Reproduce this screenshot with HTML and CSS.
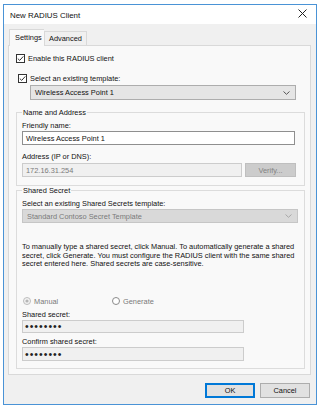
FILE: index.html
```html
<!DOCTYPE html>
<html lang="en">
<head>
    <meta charset="UTF-8">
    <meta name="viewport" content="width=device-width, initial-scale=1.0">
    <title>New RADIUS Client</title>
    <link rel="stylesheet" href="styles.css">
</head>
<body>
    <div class="window">
        <div class="title-bar">
            <span class="title-text">New RADIUS Client</span>
            <svg class="close-icon" width="9" height="9" viewBox="0 0 9 9">
                <path d="M0.5 0.5 L8.5 8.5 M8.5 0.5 L0.5 8.5" stroke="#222" stroke-width="1" fill="none"/>
            </svg>
        </div>
        <div class="dialog-body">
            <div class="tabs">
                <div class="tab active">Settings</div>
                <div class="tab">Advanced</div>
            </div>
            <div class="tab-panel">
                <label class="check-row first">
                    <svg class="checkbox" width="9" height="9" viewBox="0 0 9 9">
                        <rect x="0.5" y="0.5" width="8" height="8" fill="#fff" stroke="#333"/>
                        <path d="M1.8 4.6 L3.7 6.4 L7.3 2.4" stroke="#333" stroke-width="1" fill="none"/>
                    </svg>
                    Enable this RADIUS client
                </label>
                <label class="check-row second">
                    <svg class="checkbox" width="9" height="9" viewBox="0 0 9 9">
                        <rect x="0.5" y="0.5" width="8" height="8" fill="#fff" stroke="#333"/>
                        <path d="M1.8 4.6 L3.7 6.4 L7.3 2.4" stroke="#333" stroke-width="1" fill="none"/>
                    </svg>
                    Select an existing template:
                </label>
                <div class="combo template-combo">
                    <span>Wireless Access Point 1</span>
                    <svg class="chevron" width="7" height="4" viewBox="0 0 7 4">
                        <path d="M0.5 0.5 L3.5 3.3 L6.5 0.5" stroke="#555" stroke-width="1" fill="none"/>
                    </svg>
                </div>

                <fieldset class="group name-group">
                    <legend>Name and Address</legend>
                    <div class="field-label">Friendly name:</div>
                    <div class="textbox friendly">Wireless Access Point 1</div>
                    <div class="field-label gap-lg">Address (IP or DNS):</div>
                    <div class="address-row">
                        <div class="textbox disabled address">172.16.31.254</div>
                        <div class="btn disabled-btn">Verify...</div>
                    </div>
                </fieldset>

                <fieldset class="group secret-group">
                    <legend>Shared Secret</legend>
                    <div class="field-label">Select an existing Shared Secrets template:</div>
                    <div class="combo disabled-combo">
                        <span>Standard Contoso Secret Template</span>
                        <svg class="chevron" width="7" height="4" viewBox="0 0 7 4">
                            <path d="M0.5 0.5 L3.5 3.3 L6.5 0.5" stroke="#a8a8a8" stroke-width="1" fill="none"/>
                        </svg>
                    </div>
                    <p class="help-text">To manually type a shared secret, click Manual. To automatically generate a shared<br>secret, click Generate. You must configure the RADIUS client with the same shared<br>secret entered here. Shared secrets are case-sensitive.</p>
                    <div class="radio-row">
                        <div class="radio-item">
                            <svg width="8" height="8" viewBox="0 0 8 8">
                                <circle cx="4" cy="4" r="3.5" fill="#f3f3f3" stroke="#bcbcbc"/>
                                <circle cx="4" cy="4" r="1.6" fill="#b5b5b5"/>
                            </svg>
                            Manual
                        </div>
                        <div class="radio-item generate">
                            <svg width="8" height="8" viewBox="0 0 8 8">
                                <circle cx="4" cy="4" r="3.5" fill="#fff" stroke="#8a8a8a"/>
                            </svg>
                            Generate
                        </div>
                    </div>
                    <div class="field-label">Shared secret:</div>
                    <div class="textbox disabled secret">&bull;&bull;&bull;&bull;&bull;&bull;&bull;&bull;</div>
                    <div class="field-label">Confirm shared secret:</div>
                    <div class="textbox disabled secret last">&bull;&bull;&bull;&bull;&bull;&bull;&bull;&bull;</div>
                </fieldset>
            </div>
            <div class="footer">
                <div class="btn default-btn">OK</div>
                <div class="btn">Cancel</div>
            </div>
        </div>
    </div>
</body>
</html>
```

FILE: styles.css
```css
* {
    margin: 0;
    padding: 0;
    box-sizing: border-box;
}
body {
    font-family: "Liberation Sans", Arial, sans-serif;
    font-size: 7.4px;
    color: #111;
    background: #fff;
    width: 320px;
    height: 414px;
    overflow: hidden;
}
.window {
    margin: 4px 0 0 3px;
    width: 314px;
    height: 401px;
    border: 1px solid #4a93d6;
    display: flex;
    flex-direction: column;
    background: #f0f0f0;
}
.title-bar {
    height: 19px;
    background: #fff;
    display: flex;
    align-items: center;
    justify-content: space-between;
    padding: 0 9px 0 6px;
}
.title-text {
    font-size: 7.9px;
    margin-top: 1px;
}
.close-icon {
    margin-top: -3px;
}
.dialog-body {
    flex: 1;
    padding: 5px 5px 0 4px;
    display: flex;
    flex-direction: column;
}
.tabs {
    display: flex;
    align-items: flex-end;
    margin-bottom: -1px;
    padding-left: 1px;
}
.tab {
    height: 14px;
    padding: 0 4px;
    border: 1px solid #d9d9d9;
    border-bottom: none;
    background: #f0f0f0;
    display: flex;
    align-items: center;
    margin-bottom: 1px;
}
.tab.active {
    height: 17px;
    width: 35px;
    background: #f9f9f9;
    margin-bottom: 0;
    border-right: none;
    position: relative;
    z-index: 1;
    padding-left: 5px;
    padding-bottom: 1px;
}
.tab-panel {
    height: 330px;
    border: 1px solid #d9d9d9;
    background: #f9f9f9;
    padding-top: 7px;
}
.check-row {
    display: flex;
    align-items: center;
    height: 10px;
    gap: 3px;
}
.check-row.first {
    margin-left: 7px;
}
.check-row.second {
    margin-left: 9px;
    margin-top: 10px;
}
.combo {
    height: 15px;
    display: flex;
    align-items: center;
    justify-content: space-between;
    padding: 0 5px 0 4px;
}
.template-combo {
    margin: 2px 0 0 21px;
    width: 266px;
    background: #e5e5e5;
    border: 1px solid #adadad;
}
.disabled-combo {
    height: 14px;
    margin-top: 1px;
    width: 276px;
    background: #d9d9d9;
    border: 1px solid #c6c6c6;
    color: #7a7a7a;
}
.group {
    border: 1px solid #dcdcdc;
    margin: 8px 5px 0 7px;
    padding: 0 5px 8px 5px;
}
.group legend {
    line-height: 9px;
    height: 9px;
    padding: 0 1px;
}
.secret-group {
    margin-top: 0;
    padding-bottom: 7px;
}
.field-label {
    line-height: 9px;
    height: 9px;
    margin-top: 4px;
}
.field-label.gap-lg {
    margin-top: 7px;
}
.textbox {
    height: 14px;
    margin-top: 1px;
    border: 1px solid #8f8f8f;
    background: #fff;
    padding-left: 3px;
    display: flex;
    align-items: center;
}
.friendly {
    width: 273px;
}
.address-row {
    display: flex;
    gap: 3px;
    margin-top: 2px;
}
.address-row .textbox {
    margin-top: 0;
}
.textbox.disabled {
    background: #f0f0f0;
    border-color: #cccccc;
    color: #7a7a7a;
}
.address {
    width: 220px;
}
.btn {
    width: 50px;
    height: 15px;
    border: 1px solid #adadad;
    background: #e1e1e1;
    display: flex;
    align-items: center;
    justify-content: center;
}
.disabled-btn {
    width: 51px;
    height: 14px;
    background: #cccccc;
    border-color: #bfbfbf;
    color: #838383;
}
.help-text {
    margin-top: 20px;
    line-height: 8.5px;
    white-space: nowrap;
}
.radio-row {
    display: flex;
    height: 9px;
    margin-top: 28px;
    padding-left: 1px;
    color: #7a7a7a;
}
.radio-item {
    display: flex;
    align-items: center;
    gap: 3px;
    width: 89px;
}
.textbox.disabled.secret {
    width: 222px;
    height: 13px;
    color: #222;
    font-size: 10.5px;
    letter-spacing: 1px;
    padding-left: 2px;
}
.textbox.disabled.secret.last {
    height: 14px;
}
.footer {
    display: flex;
    justify-content: flex-end;
    gap: 5px;
    margin-top: 8px;
    padding-right: 1px;
}
.default-btn {
    border: 1px solid #0078d7;
    box-shadow: inset 0 0 0 1px #0078d7;
}
```
